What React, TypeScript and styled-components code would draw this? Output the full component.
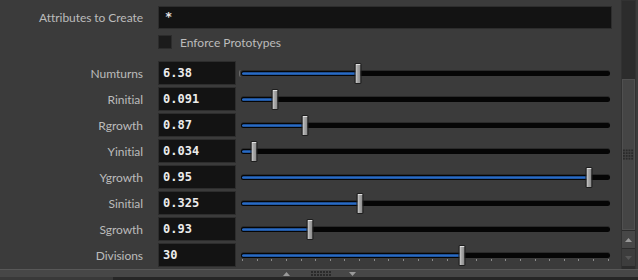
import React from 'react';
import styled, { createGlobalStyle } from 'styled-components';

const Global = createGlobalStyle`
  html, body { margin: 0; padding: 0; background: #3b3b3b; }
  body { width: 638px; height: 280px; overflow: hidden; }
`;

const Frame = styled.div`
  width: 638px;
  height: 280px;
  display: grid;
  grid-template-columns: 621px 15px 2px;
  grid-template-rows: 269px 11px;
  background: #3b3b3b;
  font-family: Lato, 'Liberation Sans', sans-serif;
`;

const Content = styled.div`
  grid-column: 1;
  grid-row: 1;
  padding: 6px 9px 0 0;
  display: flex;
  flex-direction: column;
`;

const Row = styled.div<{ $h: number; $mt?: number }>`
  display: flex;
  align-items: center;
  height: ${p => p.$h}px;
  margin-top: ${p => p.$mt ?? 0}px;
`;

const Label = styled.div`
  width: 143px;
  margin-right: 15px;
  text-align: right;
  font-size: 12px;
  letter-spacing: -0.05px;
  color: #bcbcbc;
  white-space: nowrap;
`;

const TextField = styled.div`
  flex: 1;
  align-self: stretch;
  box-sizing: border-box;
  background: #131313;
  border: 1px solid #2d2d2d;
  padding: 3px 6px 0;
  font-family: 'DejaVu Sans Mono', monospace;
  font-size: 12px;
  font-weight: bold;
  color: #e6e6e6;
`;

const Checkbox = styled.div`
  width: 14px;
  height: 14px;
  box-sizing: border-box;
  background: #1b1b1b;
  border: 1px solid #2c2c2c;
  margin-right: 8px;
`;

const CheckLabel = styled.span`
  font-size: 12px;
  color: #bcbcbc;
`;

const Params = styled.div`
  display: flex;
  flex-direction: column;
  gap: 2px;
  margin-top: 12px;
`;

const ValueField = styled.div`
  width: 78px;
  align-self: stretch;
  box-sizing: border-box;
  background: #131313;
  border: 1px solid #2d2d2d;
  padding-left: 4px;
  display: flex;
  align-items: center;
  font-family: 'DejaVu Sans Mono', monospace;
  font-weight: bold;
  font-size: 12px;
  color: #ececec;
`;

const Slider = styled.div`
  flex: 1;
  align-self: stretch;
  margin-left: 5px;
  position: relative;
`;

const Track = styled.div`
  position: absolute;
  left: 0;
  right: 2px;
  top: 10px;
  height: 5px;
  border-radius: 3px;
  background: #050505;
  box-shadow: 0 -1px 0 #2a2a2a;
`;

const Fill = styled.div`
  position: absolute;
  left: 1px;
  top: 1px;
  height: 3px;
  border-radius: 2px;
  background: linear-gradient(#153f78, #2a6bc4 50%, #1a4c90);
`;

const Handle = styled.div`
  position: absolute;
  top: 2px;
  width: 7px;
  height: 21px;
  box-sizing: border-box;
  transform: translateX(-50%);
  border: 1px solid #1e1e1e;
  border-radius: 1px;
  background: linear-gradient(90deg, #d6d6d6, #ababab 35%, #8a8a8a);
  box-shadow: inset 0 1px 0 #e0e0e0;
`;

const Ticks = styled.div`
  position: absolute;
  left: 1px;
  right: 3px;
  top: 16px;
  display: flex;
  justify-content: space-between;
`;

const Tick = styled.span`
  width: 1px;
  height: 2px;
  background: #8a8a8a;
`;

const MinMark = styled.span`
  position: absolute;
  left: -2px;
  top: 9px;
  width: 2px;
  height: 7px;
  border-left: 1px solid #6a6a6a;
  border-radius: 2px 0 0 2px;
`;

const Scroll = styled.div`
  grid-column: 2;
  grid-row: 1;
  display: flex;
  flex-direction: column;
  background: #2c2c2c;
  border: 1px solid #323232;
  border-bottom: none;
  box-sizing: border-box;
`;

const ScrollGap = styled.div`
  height: 78px;
`;

const Thumb = styled.div`
  height: 151px;
  box-sizing: border-box;
  background: #454545;
  border: 1px solid #505050;
  display: flex;
  align-items: center;
  justify-content: center;
`;

const ScrollBtn = styled.div<{ $on?: boolean }>`
  height: 17px;
  margin-top: 1px;
  background: ${p => (p.$on ? '#474747' : '#3d3d3d')};
  display: flex;
  align-items: center;
  justify-content: center;
`;

const Bottom = styled.div`
  grid-column: 1 / 4;
  grid-row: 2;
  display: flex;
  flex-direction: column;
`;

const Splitter = styled.div`
  height: 8px;
  box-sizing: border-box;
  background: #474747;
  border-top: 1px solid #585858;
  display: flex;
  align-items: center;
  padding-left: 283px;
`;

const Spacer = styled.span<{ $w: number }>`
  width: ${p => p.$w}px;
`;

const Under = styled.div`
  flex: 1;
  display: flex;
`;

const UnderLeft = styled.div`
  width: 113px;
  background: #393939;
`;

const UnderRest = styled.div`
  flex: 1;
  background: #262626;
`;

const Grip = ({ cols, rows }: { cols: number; rows: number }) => (
  <svg width={cols * 3} height={rows * 3} viewBox={`0 0 ${cols * 3} ${rows * 3}`}>
    {Array.from({ length: rows }).flatMap((_, r) =>
      Array.from({ length: cols }).map((__, c) => (
        <rect key={`${r}-${c}`} x={c * 3} y={r * 3} width={2} height={2} fill="#2a2a2a" />
      ))
    )}
  </svg>
);

const Tri = ({ up, color }: { up: boolean; color: string }) => (
  <svg width="7" height="4" viewBox="0 0 7 4">
    <polygon points={up ? '3.5,0 7,4 0,4' : '0,0 7,0 3.5,4'} fill={color} />
  </svg>
);

const params = [
  { name: 'Numturns', value: '6.38', pos: 117, min: true },
  { name: 'Rinitial', value: '0.091', pos: 34 },
  { name: 'Rgrowth', value: '0.87', pos: 64 },
  { name: 'Yinitial', value: '0.034', pos: 13 },
  { name: 'Ygrowth', value: '0.95', pos: 348 },
  { name: 'Sinitial', value: '0.325', pos: 119 },
  { name: 'Sgrowth', value: '0.93', pos: 69 },
  { name: 'Divisions', value: '30', pos: 221, ticks: 26 },
];

export default function App() {
  return (
    <>
      <Global />
      <Frame>
        <Content>
          <Row $h={23}>
            <Label>Attributes to Create</Label>
            <TextField>*</TextField>
          </Row>
          <Row $h={14} $mt={6}>
            <Label />
            <Checkbox />
            <CheckLabel>Enforce Prototypes</CheckLabel>
          </Row>
          <Params>
            {params.map(p => (
              <Row $h={24} key={p.name}>
                <Label>{p.name}</Label>
                <ValueField>{p.value}</ValueField>
                <Slider>
                  {p.min && <MinMark />}
                  <Track>
                    <Fill style={{ width: `${p.pos - 1}px` }} />
                  </Track>
                  {p.ticks && (
                    <Ticks>
                      {Array.from({ length: p.ticks }).map((_, i) => (
                        <Tick key={i} />
                      ))}
                    </Ticks>
                  )}
                  <Handle style={{ left: `${p.pos}px` }} />
                </Slider>
              </Row>
            ))}
          </Params>
        </Content>
        <Scroll>
          <ScrollGap />
          <Thumb>
            <Grip cols={4} rows={4} />
          </Thumb>
          <ScrollBtn $on>
            <Tri up color="#9a9a9a" />
          </ScrollBtn>
          <ScrollBtn>
            <Tri up={false} color="#565656" />
          </ScrollBtn>
        </Scroll>
        <Bottom>
          <Splitter>
            <Tri up color="#9a9a9a" />
            <Spacer $w={21} />
            <Grip cols={7} rows={2} />
            <Spacer $w={17} />
            <Tri up={false} color="#9a9a9a" />
          </Splitter>
          <Under>
            <UnderLeft />
            <UnderRest />
          </Under>
        </Bottom>
      </Frame>
    </>
  );
}
